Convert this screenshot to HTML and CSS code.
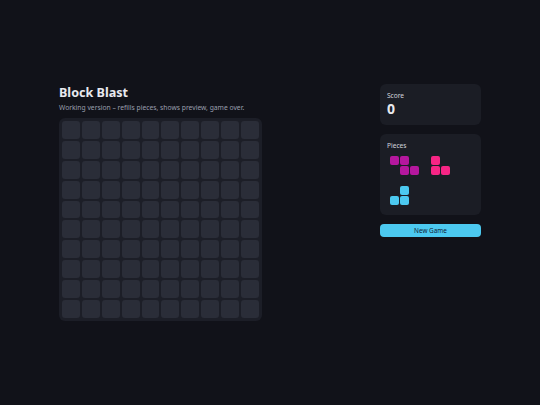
FILE: index.html
```html
<!DOCTYPE html>
<html lang="en">
<head>
  <meta charset="UTF-8">
  <meta name="viewport" content="width=device-width, initial-scale=1.0">
  <title>Block Blast</title>
  <link rel="stylesheet" href="styles.css">
</head>
<body>
  <div class="app">
    <div class="main">
      <h1>Block Blast</h1>
      <p class="sub">Working version – refills pieces, shows preview, game over.</p>
      <div class="board" id="board"></div>
    </div>
    <div class="side">
      <div class="card">
        <div class="label">Score</div>
        <div class="score">0</div>
      </div>
      <div class="card">
        <div class="label">Pieces</div>
        <div class="pieces">
          <div class="piece w3">
            <span class="c magenta"></span><span class="c magenta"></span><span class="c"></span>
            <span class="c"></span><span class="c magenta"></span><span class="c magenta"></span>
          </div>
          <div class="piece w2">
            <span class="c pink"></span><span class="c"></span>
            <span class="c pink"></span><span class="c pink"></span>
          </div>
          <div class="piece w2">
            <span class="c"></span><span class="c cyan"></span>
            <span class="c cyan"></span><span class="c cyan"></span>
          </div>
        </div>
      </div>
      <button class="btn">New Game</button>
    </div>
  </div>
  <script>
    var board = document.getElementById('board');
    for (var i = 0; i < 100; i++) {
      var cell = document.createElement('div');
      cell.className = 'cell';
      board.appendChild(cell);
    }
  </script>
</body>
</html>
```

FILE: styles.css
```css
body {
  display: flex;
  justify-content: center;
  align-items: center;
  height: 100vh;
  margin: 0;
  background-color: #111219;
  font-family: "Noto Sans", sans-serif;
  color: #e8e9ef;
}
.app {
  display: flex;
  justify-content: space-between;
  width: 422px;
}
.main {
  width: 202px;
}
h1 {
  margin: 0;
  font-size: 12.6px;
  line-height: 17px;
  font-weight: 700;
}
.sub {
  margin: 2px 0 6px;
  font-size: 6.75px;
  line-height: 9px;
  color: #9a9fae;
}
.board {
  display: grid;
  grid-template-columns: repeat(10, 1fr);
  gap: 2px;
  padding: 3px;
  width: 197px;
  height: 197px;
  background-color: #1c1e27;
  border-radius: 6px;
}
.cell {
  background-color: #2a2d38;
  border-radius: 3px;
}
.side {
  width: 101px;
  display: flex;
  flex-direction: column;
}
.card {
  background-color: #1b1d25;
  border-radius: 6px;
  padding: 7px;
  margin-bottom: 9px;
}
.label {
  font-size: 6.6px;
  line-height: 9px;
  color: #d4d6de;
}
.score {
  font-size: 14px;
  font-weight: 700;
  line-height: 18px;
}
.pieces {
  display: flex;
  flex-wrap: wrap;
  gap: 11px;
  padding: 6px 3px 3px;
}
.piece {
  display: grid;
  gap: 1px;
  grid-auto-rows: 9px;
}
.piece.w3 {
  grid-template-columns: repeat(3, 9px);
  margin-right: 1px;
}
.piece.w2 {
  grid-template-columns: repeat(2, 9px);
}
.c {
  display: block;
  border-radius: 2px;
}
.magenta {
  background-color: #b5179e;
}
.pink {
  background-color: #f72585;
}
.cyan {
  background-color: #4cc9f0;
}
.btn {
  height: 13px;
  padding: 0;
  border: none;
  border-radius: 4px;
  background-color: #4cc9f0;
  color: #102034;
  font-family: "Noto Sans", sans-serif;
  font-size: 6.4px;
  cursor: pointer;
}
```
